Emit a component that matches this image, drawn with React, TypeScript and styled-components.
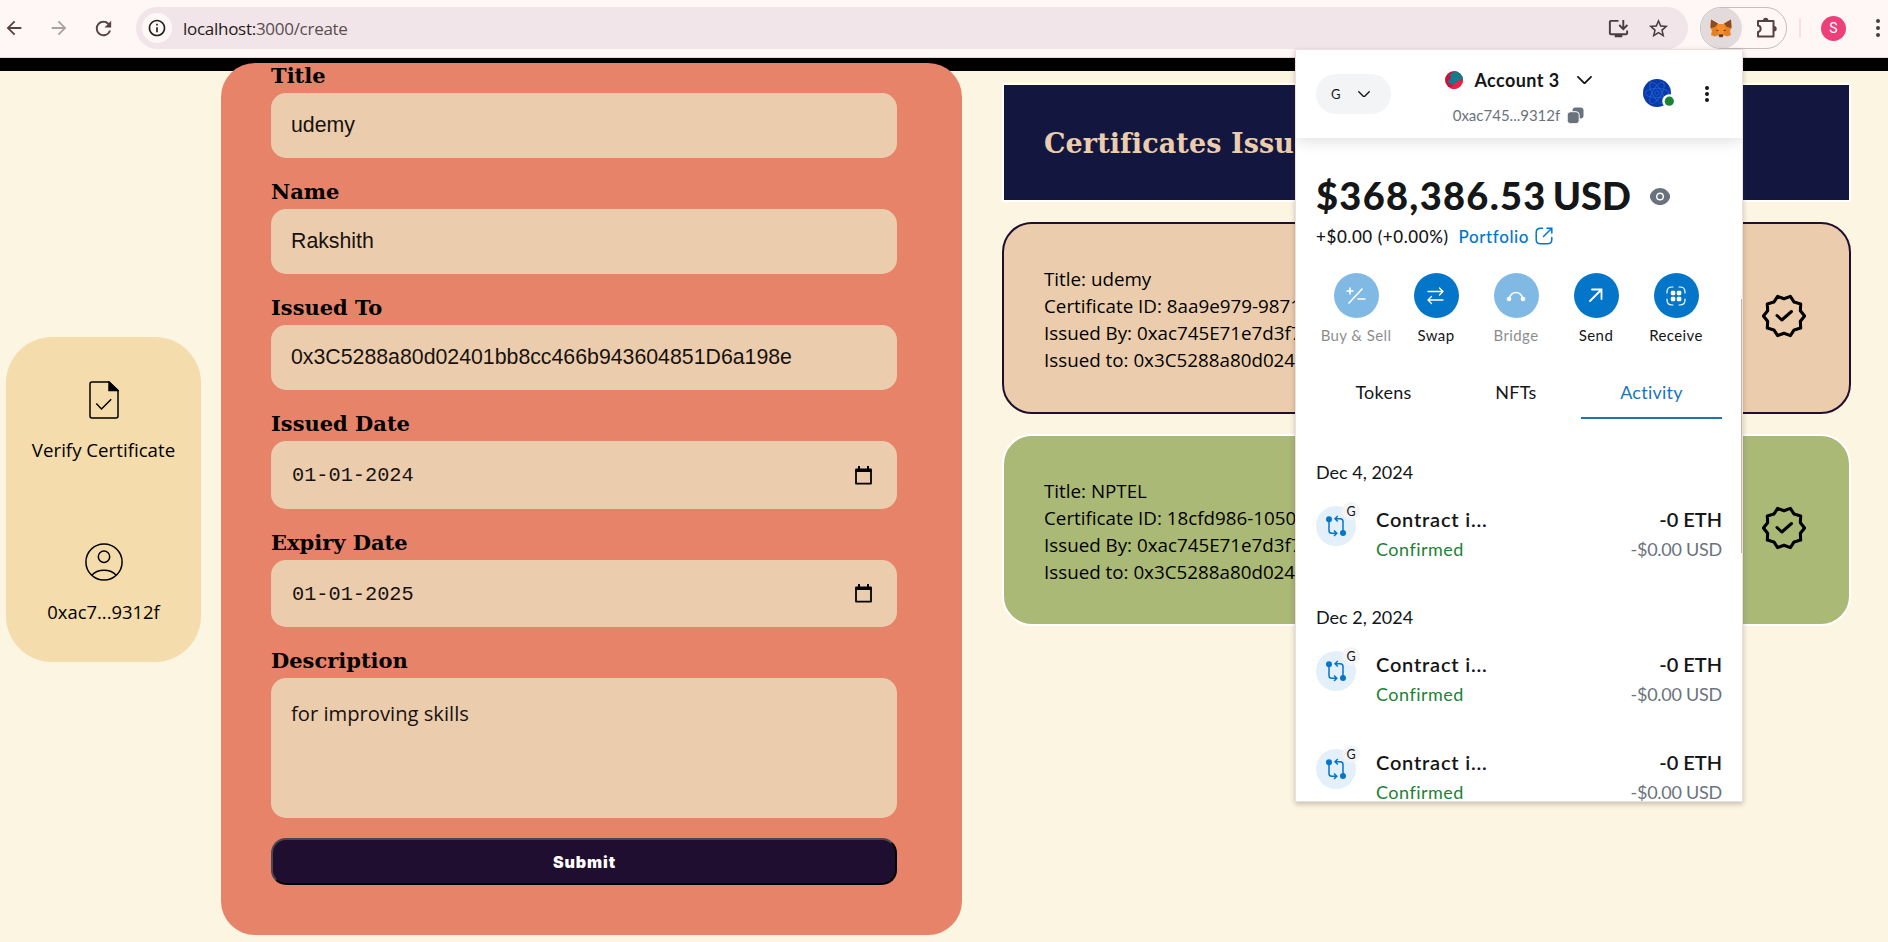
import React from 'react';
import styled, { createGlobalStyle, css } from 'styled-components';
import { MdArrowBack, MdArrowForward, MdRefresh, MdInfoOutline, MdInstallDesktop, MdStarBorder } from 'react-icons/md';

const SANS = '"Open Sans", "Noto Sans", sans-serif';
const SERIF = '"DejaVu Serif", Georgia, serif';
const WALLET = 'Lato, sans-serif';

const GlobalStyle = createGlobalStyle`
  * { box-sizing: border-box; }
  body { margin: 0; background: #fbf5e1; }
  svg { display: block; flex: none; }
`;

const Window = styled.div`
  position: relative;
  width: 1888px;
  height: 942px;
  overflow: hidden;
  background: #fbf5e1;
  color: #000;
  font-family: ${SANS};
`;

/* ---------- browser toolbar ---------- */

const Toolbar = styled.header`
  display: flex;
  align-items: center;
  height: 58px;
  padding: 0 0 1px 3px;
  background: #fff7f5;
  border-bottom: 1px solid #e0d9d8;
`;

const NavButtons = styled.div`
  display: flex;
  gap: 22.5px;
  color: #574143;
`;

const Faded = styled.span`
  display: flex;
  color: #a9a2a1;
`;

const AddressBar = styled.div`
  display: flex;
  align-items: center;
  width: 1552px;
  height: 42px;
  margin-left: 21px;
  padding: 0 18px 0 6px;
  border-radius: 21px;
  background: #f2e5e9;
  color: #4a3c40;
`;

const SiteInfo = styled.span`
  display: flex;
  align-items: center;
  justify-content: center;
  width: 30px;
  height: 30px;
  border-radius: 50%;
  background: #fff8f7;
  color: #231c1e;
`;

const Url = styled.span`
  flex: 1;
  margin-left: 11px;
  font-size: 17px;
  letter-spacing: -0.28px;
  color: #5a4d51;

  b {
    font-weight: 400;
    color: #1f1a1b;
  }
`;

const AddressActions = styled.div`
  display: flex;
  align-items: center;
  gap: 17px;
`;

const ExtensionPill = styled.div`
  display: flex;
  align-items: center;
  width: 87px;
  height: 42px;
  margin-left: 12px;
  border: 1px solid #c4bcbe;
  border-radius: 21px;
  overflow: hidden;
`;

const ActiveExtension = styled.span`
  display: flex;
  align-items: center;
  justify-content: center;
  width: 42px;
  height: 42px;
  margin: -1px 13px -1px -1px;
  border-radius: 50%;
  background: #e2dadb;
`;

const Divider = styled.i`
  width: 2px;
  height: 20px;
  margin-left: 12px;
  background: #fbdfe5;
`;

const Profile = styled.span`
  width: 25px;
  height: 25px;
  margin: 0 30px 0 20px;
  border-radius: 50%;
  background: #ec407a;
  color: #fff;
  font: 400 14px/25px Roboto, sans-serif;
  text-align: center;
`;

/* ---------- page ---------- */

const SiteNav = styled.nav`
  height: 13px;
  background: #000;
`;

const Page = styled.main`
  display: flex;
  align-items: flex-start;
  padding-left: 6px;
`;

const SideMenu = styled.aside`
  display: flex;
  flex-direction: column;
  gap: 80px;
  width: 195px;
  height: 325px;
  margin-top: 266px;
  padding-top: 44px;
  border-radius: 46px;
  background: #f5dcac;
`;

const SideItem = styled.div<{ $size: number }>`
  display: flex;
  flex-direction: column;
  align-items: center;
  gap: 18px;
  font-size: ${(p) => p.$size}px;
  line-height: 26px;
`;

const FormCard = styled.form`
  display: flex;
  flex-direction: column;
  width: 741px;
  height: 872px;
  margin: -8px 0 0 20px;
  padding: 1px 65px 0 50px;
  border-radius: 34px;
  background: #e68369;
`;

const Field = styled.div`
  margin-bottom: 22px;
`;

const Label = styled.div`
  margin-bottom: 5px;
  font: 700 21px/24px ${SERIF};
`;

const boxBase = css`
  border-radius: 15px;
  background: #ebcdad;
  color: #17110f;
`;

const TextBox = styled.div`
  ${boxBase}
  height: 65px;
  padding: 0 20px;
  font: 400 21.3px/65px "Liberation Sans", Arial, sans-serif;
`;

const DateBox = styled.div<{ $height: number }>`
  ${boxBase}
  display: flex;
  align-items: center;
  justify-content: space-between;
  height: ${(p) => p.$height}px;
  padding: 0 25px 0 21px;
  font: 400 20.3px/1 "Liberation Mono", monospace;
`;

const DateValue = styled.span`
  padding-top: 3px;
`;

const AreaBox = styled.div`
  ${boxBase}
  height: 140px;
  padding: 22px 20px;
  font-size: 20.2px;
  line-height: 27px;
`;

const Submit = styled.button`
  height: 47px;
  margin-top: -2px;
  padding: 1px 0 0 1px;
  border: 2px outset #000;
  border-color: #4a4550 #000 #000 #4a4550;
  border-radius: 15px;
  background: #200e30;
  color: #fff;
  font: 900 16px/1 Inter, sans-serif;
  letter-spacing: 0.9px;
`;

const Issued = styled.section`
  display: flex;
  flex-direction: column;
  gap: 20px;
  width: 849px;
  margin: 12px 0 0 40px;
`;

const Banner = styled.h1`
  height: 119px;
  margin: 0;
  padding-left: 40px;
  border: 2px solid #fff;
  background: #131740;
  color: #ebcdad;
  font: 700 27px/117px ${SERIF};
  letter-spacing: 0.1px;
`;

const Certificate = styled.article<{ $line: string; $fill: string }>`
  display: flex;
  align-items: flex-start;
  justify-content: space-between;
  height: 192px;
  padding: 42px 43px 0 40px;
  border: 2px solid ${(p) => p.$line};
  border-radius: 30px;
  background: ${(p) => p.$fill};
  font-size: 18.8px;
  line-height: 27px;
`;

/* ---------- wallet popup ---------- */

const Wallet = styled.div`
  position: absolute;
  left: 1296px;
  top: 50px;
  width: 446px;
  height: 751px;
  overflow: hidden;
  background: #fff;
  outline: 1px solid #ecdfe0;
  box-shadow: 0 2px 5px 1px rgba(70, 40, 40, 0.28);
  color: #141618;
  font-family: ${WALLET};
`;

const ScrollThumb = styled.i`
  position: absolute;
  right: 0;
  top: 249px;
  width: 1px;
  height: 254px;
  background: #c9b49c;
`;

const WalletHeader = styled.div`
  display: grid;
  grid-template-columns: 1fr auto 1fr;
  height: 88px;
  padding: 0 20px;
  box-shadow: 0 3px 14px rgba(0, 0, 0, 0.13);
`;

const Network = styled.div`
  display: flex;
  align-items: center;
  justify-content: space-between;
  width: 75px;
  height: 40px;
  margin-top: 24px;
  padding: 0 21px 0 15px;
  border-radius: 20px;
  background: #f2f4f6;
  font-size: 13px;
`;

const Account = styled.div`
  display: flex;
  flex-direction: column;
  align-items: center;
  padding: 18px 1px 0 0;
`;

const AccountName = styled.div`
  display: flex;
  align-items: center;
  height: 24px;
  font-weight: 700;
  font-size: 18px;
  letter-spacing: 0.42px;

  span {
    margin: 0 17px 0 11px;
  }
`;

const AccountHash = styled.div`
  display: flex;
  align-items: center;
  gap: 7px;
  height: 20px;
  margin-top: 13px;
  color: #6a737d;
  font-size: 15px;
`;

const HeaderTools = styled.div`
  display: flex;
  align-items: flex-start;
  justify-content: flex-end;
  gap: 30px;
  padding: 29px 13px 0 0;
`;

const Kebab = styled.svg`
  margin-top: 7px;
`;

const WalletBody = styled.div`
  padding: 35px 20px 0;
`;

const Balance = styled.div`
  display: flex;
  align-items: center;
  height: 44px;
  font-weight: 900;
  font-size: 38px;

  svg {
    margin-left: 19px;
    margin-top: 2px;
  }
`;

const Amount = styled.span<{ $spacing: number }>`
  letter-spacing: ${(p) => p.$spacing}px;

  & + & {
    margin-left: 6px;
  }
`;

const Change = styled.div`
  display: flex;
  align-items: center;
  height: 24px;
  margin-top: 7px;
  font-weight: 500;
  font-size: 17px;
  letter-spacing: 0.58px;
`;

const Portfolio = styled.a`
  display: flex;
  align-items: center;
  gap: 6px;
  margin-left: 10px;
  color: #0376c9;
`;

const Actions = styled.div`
  display: grid;
  grid-template-columns: repeat(5, 80px);
  margin-top: 25px;
`;

const Action = styled.div<{ $off?: boolean }>`
  display: flex;
  flex-direction: column;
  align-items: center;
  gap: 7px;
  opacity: ${(p) => (p.$off ? 0.5 : 1)};
  font-size: 15px;
  line-height: 20px;
  letter-spacing: 0.4px;
  white-space: nowrap;
`;

const Disc = styled.span`
  display: flex;
  align-items: center;
  justify-content: center;
  width: 45px;
  height: 45px;
  border-radius: 50%;
  background: #0376c9;
`;

const Tabs = styled.div`
  display: grid;
  grid-template-columns: 135px 130px 141px;
  height: 39px;
  margin-top: 35px;
  font-size: 18px;
  line-height: 24px;
  text-align: center;
`;

const Tab = styled.div<{ $active?: boolean }>`
  letter-spacing: 0.25px;
  ${(p) =>
    p.$active &&
    css`
      color: #1c75b8;
      border-bottom: 2px solid #1c75b8;
    `}
`;

const Day = styled.div`
  margin-top: 41px;
  font-size: 18px;
  line-height: 24px;

  & ~ & {
    margin-top: 43px;
  }
`;

const Entry = styled.div<{ $gap: number }>`
  display: flex;
  height: 56px;
  margin-top: ${(p) => p.$gap}px;
`;

const EntryIcon = styled.div`
  position: relative;
  display: flex;
  align-items: center;
  justify-content: center;
  width: 40px;
  height: 40px;
  margin-right: 20px;
  border-radius: 50%;
  background: #e3f0f9;
`;

const NetworkBadge = styled.span`
  position: absolute;
  right: -4px;
  top: -4px;
  width: 18px;
  height: 18px;
  border-radius: 50%;
  background: #f2f4f6;
  font-size: 12.5px;
  line-height: 19px;
  text-align: center;
`;

const EntryText = styled.div<{ $end?: boolean }>`
  display: flex;
  flex-direction: column;
  gap: 4px;
  margin-left: ${(p) => (p.$end ? 'auto' : '0')};
  text-align: ${(p) => (p.$end ? 'right' : 'left')};
  line-height: 26px;
`;

const Strong = styled.span<{ $spacing: number }>`
  font-weight: 600;
  font-size: 20px;
  letter-spacing: ${(p) => p.$spacing}px;
`;

const Status = styled.span`
  color: #1c8234;
  font-size: 18px;
  letter-spacing: 0.48px;
`;

const Fiat = styled.span`
  color: #6a737d;
  font-size: 18px;
  letter-spacing: -0.25px;
`;

/* ---------- drawings ---------- */

const Fox = () => (
  <svg width="22" height="19" viewBox="0 0 22 19">
    <path fill="#e88024" d="M1 0.5 8.5 5h5L21 .5l.6 8L20 12l1 4-3.5 1.5-3-1-2 2h-3l-2-2-3 1L1 16l1-4L.4 8.500z" />
    <path fill="#8a4b21" d="M1 .5 8 4.500 5 8 .5 9zM21 .5 14 4.500 17 8 21.500 9z" />
    <path fill="#f58d2f" d="M8 5h6l1.500 6L13 15.500H9L6.500 11z" />
    <path fill="#37322f" d="M6 10.500l3 1.300-2 .4zM16 10.500l-3 1.300 2 .4zM9 15.500h4v2.200H9z" />
    <path fill="#d9c2ac" d="M7 16l2 .5.5 2zM15 16l-2 .5-.5 2z" />
  </svg>
);

const Puzzle = () => (
  <svg width="24" height="24" viewBox="0 0 24 24" fill="none" stroke="#574143" strokeWidth="2" strokeLinejoin="round">
    <path d="M3 5h15.500v15.500H3v-4.600a3.200 3.200 0 0 0 0-6.300z" />
    <path fill="#574143" stroke="none" d="M8 4.500a2.700 2.700 0 0 1 5.400 0zM19 10a2.700 2.700 0 0 1 0 5.400z" />
  </svg>
);

const Dots = ({ gap, r, color }: { gap: number; r: number; color: string }) => (
  <Kebab width={r * 2} height={gap * 2 + r * 2} fill={color}>
    {[0, 1, 2].map((i) => (
      <circle key={i} cx={r} cy={r + i * gap} r={r} />
    ))}
  </Kebab>
);

const FileCheck = () => (
  <svg width="30" height="38" viewBox="0 0 30 38" fill="none" stroke="#000" strokeWidth="1.500">
    <path d="M20 1H3a2 2 0 0 0-2 2v32a2 2 0 0 0 2 2h24a2 2 0 0 0 2-2V9.500z" strokeLinejoin="round" />
    <path d="M20 1v8.500h9z" fill="#000" />
    <path d="m7.300 22.500 5.200 5.500 9.700-9.700" />
  </svg>
);

const UserCircle = () => (
  <svg width="38" height="38" viewBox="0 0 38 38" fill="none" stroke="#000" strokeWidth="1.500">
    <circle cx="19" cy="19" r="18.100" />
    <circle cx="19" cy="13.700" r="5.700" />
    <path d="M6.800 32.300C9.500 29 14 27.200 19 27.200s9.500 1.800 12.200 5.100" />
  </svg>
);

const Calendar = () => (
  <svg width="17" height="19" viewBox="0 0 17 19">
    <path fill="none" stroke="#000" strokeWidth="1.800" d="M1 4h15v13.600H1z" strokeLinejoin="round" />
    <path d="M.5 2.500h16V6H.5zM3 0h2v3H3zM12 0h2v3h-2z" />
  </svg>
);

const sealPoints = Array.from({ length: 20 }, (_, i) => {
  const radius = i % 2 ? 17.200 : 20.600;
  const angle = (i * Math.PI) / 10;
  return `${(22 + radius * Math.cos(angle)).toFixed(2)},${(22 + radius * Math.sin(angle)).toFixed(2)}`;
}).join(' ');

const SealIcon = styled.svg`
  margin-top: 28px;
`;

const Seal = () => (
  <SealIcon width="44" height="44" viewBox="0 0 44 44" fill="none" stroke="#000" strokeWidth="3.100" strokeLinejoin="round">
    <polygon points={sealPoints} />
    <path d="m15 21.500 4.800 4.500L29.500 17.500" strokeWidth="3" strokeLinecap="round" />
  </SealIcon>
);

const Chevron = ({ width }: { width: number }) => (
  <svg width={width} height={width * 0.56} viewBox="0 0 16 9" fill="none" stroke="#141618" strokeWidth="1.900" strokeLinecap="round">
    <path d="m1 1 7 7 7-7" />
  </svg>
);

const Jazzicon = () => (
  <svg width="18" height="18" viewBox="0 0 18 18">
    <clipPath id="jazz"><circle cx="9" cy="9" r="9" /></clipPath>
    <g clipPath="url(#jazz)">
      <path fill="#c8143b" d="M0 0h18v18H0z" />
      <path fill="#177a8c" d="M10 0 4.500 4l1.500 3-3.500 3.500L8 14.500l5-4.500 5-1V0z" />
      <path fill="#f21e48" d="M8 14.500 13 10l5-1v9H4z" />
    </g>
  </svg>
);

const Copy = () => (
  <svg width="17" height="17" viewBox="0 0 17 17" fill="#6a737d">
    <rect x="5.500" y=".5" width="11" height="11" rx="3" />
    <rect x=".2" y="4.700" width="12" height="12" rx="3.200" stroke="#fff" strokeWidth="1" />
  </svg>
);

const Atom = () => (
  <svg width="32" height="30" viewBox="0 0 32 30">
    <circle cx="14" cy="14" r="14" fill="#0a3aa8" />
    <g fill="none" stroke="#1f5fd2" strokeWidth=".9">
      <ellipse cx="14" cy="14" rx="12" ry="4.600" />
      <ellipse cx="14" cy="14" rx="12" ry="4.600" transform="rotate(60 14 14)" />
      <ellipse cx="14" cy="14" rx="12" ry="4.600" transform="rotate(120 14 14)" />
      <circle cx="14" cy="14" r="2.200" />
    </g>
    <circle cx="26.300" cy="22.200" r="7" fill="#fff" />
    <circle cx="26.300" cy="22.200" r="4.600" fill="#1c8234" />
  </svg>
);

const Eye = () => (
  <svg width="20" height="17" viewBox="0 0 20 17">
    <path fill="#6a737d" d="M10 0C5.500 0 2 3 .4 6.300a4.800 4.800 0 0 0 0 4.400C2 14 5.500 17 10 17s8-3 9.600-6.300a4.800 4.800 0 0 0 0-4.400C18 3 14.500 0 10 0z" />
    <circle cx="10" cy="8.500" r="3.300" fill="none" stroke="#fff" strokeWidth="1.400" />
  </svg>
);

const External = () => (
  <svg width="18" height="18" viewBox="0 0 18 18" fill="none" stroke="#0376c9" strokeWidth="1.500" strokeLinecap="round">
    <path d="m8.500 9.500 8-8M12 1.200h4.800V6M7.500 1.200H5.500C2.500 1.200 1.200 2.500 1.200 5.500v7c0 3 1.300 4.300 4.300 4.300h7c3 0 4.300-1.300 4.300-4.300v-2" />
  </svg>
);

const actionIcons: Record<string, React.ReactNode> = {
  'Buy & Sell': <path d="M2 6h6M5 3v6M4 18 17 4M13 14h7" />,
  Swap: <path d="M3 6.500h15M14.500 3l3.500 3.500-3.500 3.500M18 15H3M6.500 11.500 3 15l3.500 3.500" strokeWidth="1.300" />,
  Bridge: (
    <>
      <path d="M4 14C5.500 9 8 7.500 11 7.500s5.500 1.500 7 6.500" />
      <circle cx="4" cy="14" r="1.500" fill="#fff" />
      <circle cx="18" cy="14" r="1.500" fill="#fff" />
    </>
  ),
  Send: <path d="M5 16 16 5M7 4.500h9.500V14" strokeWidth="1.800" />,
  Receive: (
    <>
      <path d="M2 8V7c0-3.500 1.500-5 5-5h1M14 2h1c3.500 0 5 1.500 5 5v1M20 14v1c0 3.500-1.500 5-5 5h-1M8 20H7c-3.500 0-5-1.500-5-5v-1" strokeWidth="1.200" />
      <g fill="#fff" stroke="none">
        <rect x="5.800" y="5.800" width="4.500" height="4.500" rx="1.300" />
        <rect x="11.800" y="5.800" width="4.500" height="4.500" rx="1.300" />
        <rect x="5.800" y="11.800" width="4.500" height="4.500" rx="1.300" />
        <rect x="11.800" y="11.800" width="4.500" height="4.500" rx="1.300" />
      </g>
    </>
  ),
};

const Interaction = () => (
  <svg width="22" height="22" viewBox="0 0 22 22" fill="none" stroke="#0376c9" strokeWidth="1.500">
    <path d="M4 5v10.500c0 2 .8 2.800 2.800 2.800H11M9 15.500l2.800 2.800L9 21M18 17V6.500c0-2-.8-2.800-2.800-2.800H10.500M12.800 1 10 3.700l2.800 2.800" />
    <circle cx="4" cy="4.300" r="3" fill="#0376c9" stroke="none" />
    <circle cx="18" cy="18" r="3" fill="#0376c9" stroke="none" />
  </svg>
);

/* ---------- content ---------- */

const certificates = [
  { title: 'udemy', id: '8aa9e979-9871', line: '#200e30', fill: '#ebcdad' },
  { title: 'NPTEL', id: '18cfd986-1050', line: '#fff', fill: '#abb977' },
];

const actions: { name: string; off?: boolean }[] = [
  { name: 'Buy & Sell', off: true },
  { name: 'Swap' },
  { name: 'Bridge', off: true },
  { name: 'Send' },
  { name: 'Receive' },
];

const ActivityEntry = ({ gap = 22 }: { gap?: number }) => (
  <Entry $gap={gap}>
    <EntryIcon>
      <Interaction />
      <NetworkBadge>G</NetworkBadge>
    </EntryIcon>
    <EntryText>
      <Strong $spacing={0.8}>Contract i...</Strong>
      <Status>Confirmed</Status>
    </EntryText>
    <EntryText $end>
      <Strong $spacing={0}>-0 ETH</Strong>
      <Fiat>-$0.00 USD</Fiat>
    </EntryText>
  </Entry>
);

export default function App() {
  return (
    <Window>
      <GlobalStyle />
      <Toolbar>
        <NavButtons>
          <MdArrowBack size={22} />
          <Faded><MdArrowForward size={22} /></Faded>
          <MdRefresh size={23} />
        </NavButtons>
        <AddressBar>
          <SiteInfo><MdInfoOutline size={20} /></SiteInfo>
          <Url><b>localhost:</b>3000/create</Url>
          <AddressActions>
            <MdInstallDesktop size={23} />
            <MdStarBorder size={23} />
          </AddressActions>
        </AddressBar>
        <ExtensionPill>
          <ActiveExtension><Fox /></ActiveExtension>
          <Puzzle />
        </ExtensionPill>
        <Divider />
        <Profile>S</Profile>
        <svg width="4" height="18" fill="#4a3c40">
          <circle cx="2" cy="2" r="2" />
          <circle cx="2" cy="9" r="2" />
          <circle cx="2" cy="16" r="2" />
        </svg>
      </Toolbar>
      <SiteNav />
      <Page>
        <SideMenu>
          <SideItem $size={18.7}>
            <FileCheck />
            Verify Certificate
          </SideItem>
          <SideItem $size={18.4}>
            <UserCircle />
            0xac7...9312f
          </SideItem>
        </SideMenu>

        <FormCard>
          <Field>
            <Label>Title</Label>
            <TextBox>udemy</TextBox>
          </Field>
          <Field>
            <Label>Name</Label>
            <TextBox>Rakshith</TextBox>
          </Field>
          <Field>
            <Label>Issued To</Label>
            <TextBox>0x3C5288a80d02401bb8cc466b943604851D6a198e</TextBox>
          </Field>
          <Field>
            <Label>Issued Date</Label>
            <DateBox $height={68}><DateValue>01-01-2024</DateValue><Calendar /></DateBox>
          </Field>
          <Field>
            <Label>Expiry Date</Label>
            <DateBox $height={67}><DateValue>01-01-2025</DateValue><Calendar /></DateBox>
          </Field>
          <Field>
            <Label>Description</Label>
            <AreaBox>for improving skills</AreaBox>
          </Field>
          <Submit type="button">Submit</Submit>
        </FormCard>

        <Issued>
          <Banner>Certificates Issued</Banner>
          {certificates.map((c) => (
            <Certificate key={c.title} $line={c.line} $fill={c.fill}>
              <div>
                <div>Title: {c.title}</div>
                <div>Certificate ID: {c.id}</div>
                <div>Issued By: 0xac745E71e7d3f7</div>
                <div>Issued to: 0x3C5288a80d024</div>
              </div>
              <Seal />
            </Certificate>
          ))}
        </Issued>
      </Page>

      <Wallet>
        <WalletHeader>
          <Network>G<Chevron width={12} /></Network>
          <Account>
            <AccountName>
              <Jazzicon />
              <span>Account 3</span>
              <Chevron width={15} />
            </AccountName>
            <AccountHash>0xac745...9312f<Copy /></AccountHash>
          </Account>
          <HeaderTools>
            <Atom />
            <Dots gap={6} r={2} color="#141618" />
          </HeaderTools>
        </WalletHeader>
        <WalletBody>
          <Balance>
            <Amount $spacing={1.3}>$368,386.53</Amount>
            <Amount $spacing={0}>USD</Amount>
            <Eye />
          </Balance>
          <Change>
            +$0.00 (+0.00%)
            <Portfolio>Portfolio<External /></Portfolio>
          </Change>
          <Actions>
            {actions.map((a) => (
              <Action key={a.name} $off={a.off}>
                <Disc>
                  <svg width="22" height="22" viewBox="0 0 22 22" fill="none" stroke="#fff" strokeWidth="1.600" strokeLinecap="round">
                    {actionIcons[a.name]}
                  </svg>
                </Disc>
                {a.name}
              </Action>
            ))}
          </Actions>
          <Tabs>
            <Tab>Tokens</Tab>
            <Tab>NFTs</Tab>
            <Tab $active>Activity</Tab>
          </Tabs>
          <Day>Dec 4, 2024</Day>
          <ActivityEntry />
          <Day>Dec 2, 2024</Day>
          <ActivityEntry />
          <ActivityEntry gap={42} />
        </WalletBody>
        <ScrollThumb />
      </Wallet>
    </Window>
  );
}
